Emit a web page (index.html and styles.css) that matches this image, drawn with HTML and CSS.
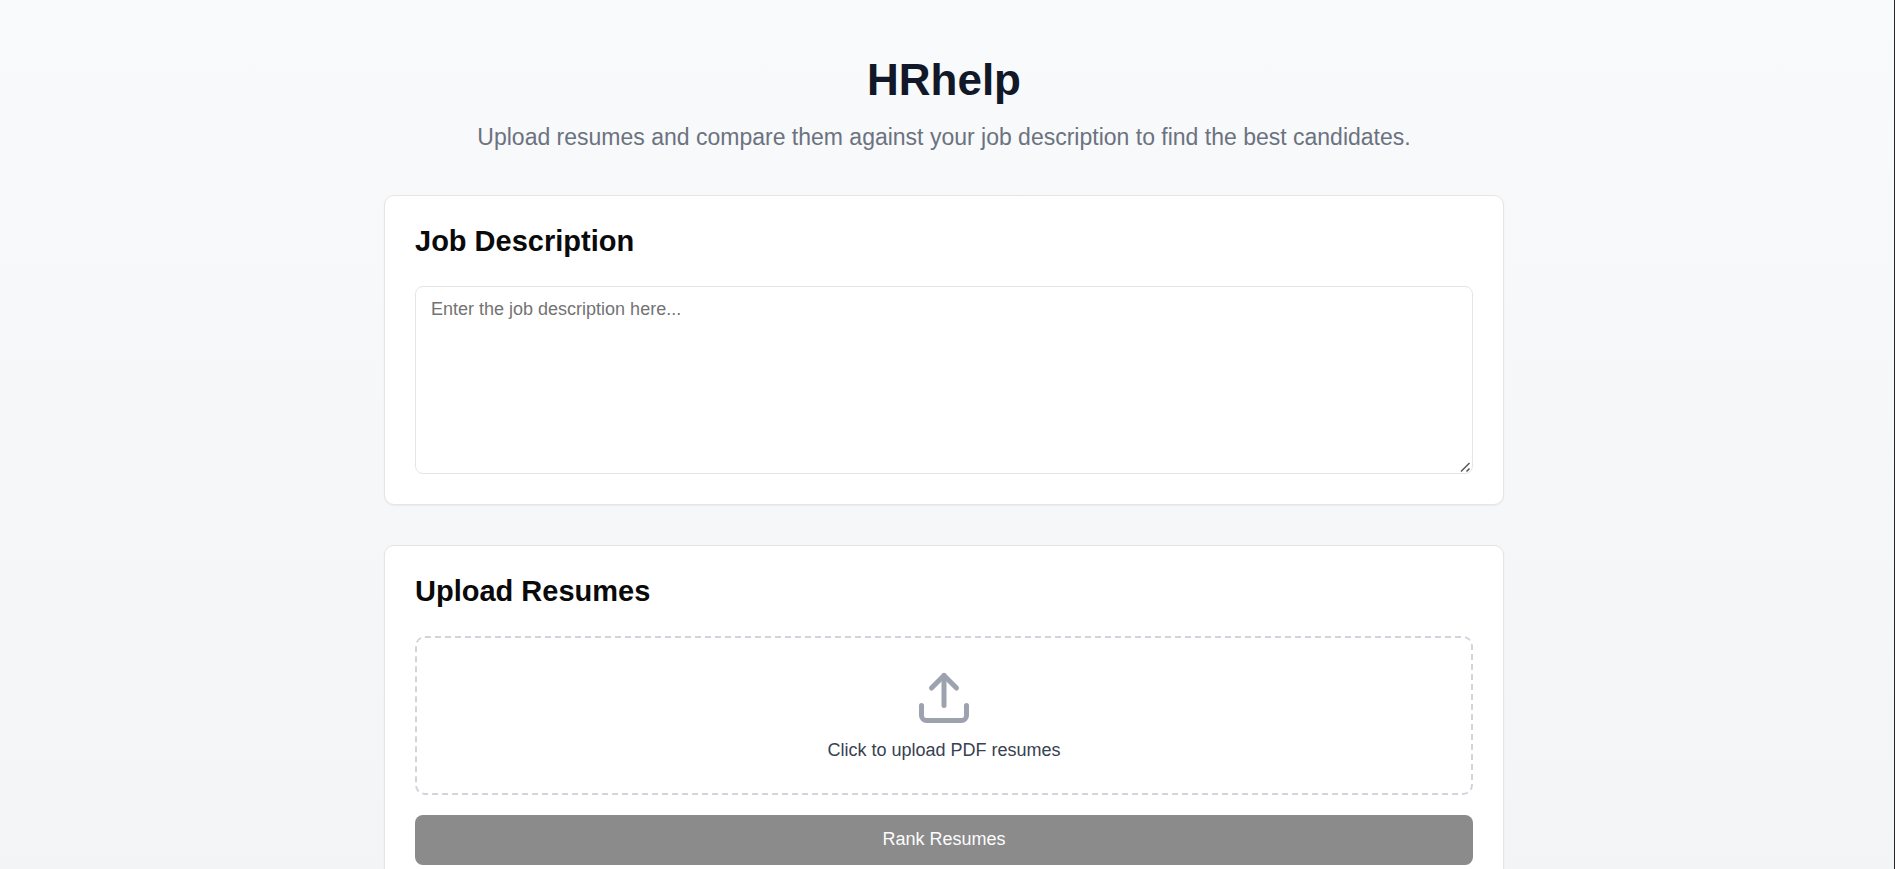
FILE: index.html
```html
<!DOCTYPE html>
<html lang="en">
<head>
<meta charset="utf-8">
<meta name="viewport" content="width=device-width, initial-scale=1">
<title>HRhelp</title>
<link rel="stylesheet" href="styles.css">
</head>
<body>
<main class="page">
  <div class="container">
    <header class="intro">
      <h1 class="intro-title">HRhelp</h1>
      <p class="intro-text">Upload resumes and compare them against your job description to find the best candidates.</p>
    </header>

    <section class="card">
      <h2 class="card-title"><label for="job-description">Job Description</label></h2>
      <textarea class="textarea" id="job-description" placeholder="Enter the job description here..."></textarea>
    </section>

    <section class="card">
      <h2 class="card-title">Upload Resumes</h2>
      <div class="upload-form">
        <label class="dropzone" for="resumes">
          <svg class="dropzone-icon" viewBox="0 0 24 24" fill="none" stroke="currentColor" stroke-width="2" stroke-linecap="round" stroke-linejoin="round" aria-hidden="true">
            <path d="M21 15v4a2 2 0 0 1-2 2H5a2 2 0 0 1-2-2v-4"/>
            <polyline points="17 8 12 3 7 8"/>
            <line x1="12" x2="12" y1="3" y2="15"/>
          </svg>
          <span class="dropzone-text">Click to upload PDF resumes</span>
          <input class="file-input" id="resumes" type="file" accept=".pdf" multiple>
        </label>
        <button class="button" type="button" disabled>Rank Resumes</button>
      </div>
    </section>
  </div>
</main>
</body>
</html>
```

FILE: styles.css
```css
*,
*::before,
*::after {
  box-sizing: border-box;
}

html {
  scrollbar-width: none;
}

body {
  margin: 0;
  font-family: "Liberation Sans", Arial, Helvetica, sans-serif;
  font-size: 18px;
  line-height: 25px;
  color: #0a0a0a;
}

.page {
  min-height: 100vh;
  padding: 50px 26px 50px 20px;
  border-right: 1px solid #27272a;
  background: linear-gradient(to bottom, #f9fafb, #f3f4f6);
}

.container {
  display: flex;
  flex-direction: column;
  gap: 40px;
  max-width: 1120px;
  margin: 0 auto;
}

.intro {
  display: flex;
  flex-direction: column;
  gap: 10px;
  text-align: center;
}

.intro-title {
  margin: 0;
  font-size: 44px;
  line-height: 60px;
  font-weight: 700;
  color: #111827;
}

.intro-text {
  margin: 0;
  font-size: 23px;
  line-height: 35px;
  color: #6b7280;
}

.card {
  display: flex;
  flex-direction: column;
  gap: 30px;
  padding: 30px;
  border: 1px solid #e5e5e5;
  border-radius: 10px;
  background: #fff;
  box-shadow: 0 1px 2px rgba(0, 0, 0, 0.05);
}

.card-title {
  margin: 0;
  font-size: 29px;
  line-height: 30px;
  font-weight: 700;
}

.textarea {
  display: block;
  width: 100%;
  height: 188px;
  padding: 10px 15px;
  border: 1px solid #e5e5e5;
  border-radius: 8px;
  background: #fff;
  font: inherit;
  color: inherit;
  resize: vertical;
}

.textarea::placeholder {
  color: #737373;
}

.textarea::-webkit-resizer {
  background: url("data:image/svg+xml,%3Csvg xmlns='http://www.w3.org/2000/svg' width='12' height='12' fill='none' stroke='%23555' stroke-width='1.5'%3E%3Cpath d='M1 10.5L9.5 2M6.5 10.5L9.5 7.5'/%3E%3C/svg%3E") right bottom no-repeat;
}

.upload-form {
  display: flex;
  flex-direction: column;
  gap: 20px;
}

.dropzone {
  display: flex;
  flex-direction: column;
  align-items: center;
  gap: 10px;
  padding: 30px;
  border: 2px dashed #d1d5db;
  border-radius: 10px;
  color: #374151;
  cursor: pointer;
}

.dropzone-icon {
  width: 60px;
  height: 60px;
  color: #9ca3af;
}

.file-input {
  display: none;
}

.button {
  width: 100%;
  height: 50px;
  padding: 0 20px 2px;
  border: 0;
  border-radius: 8px;
  background: #8b8b8b;
  font: inherit;
  color: #fcfcfc;
}
```
